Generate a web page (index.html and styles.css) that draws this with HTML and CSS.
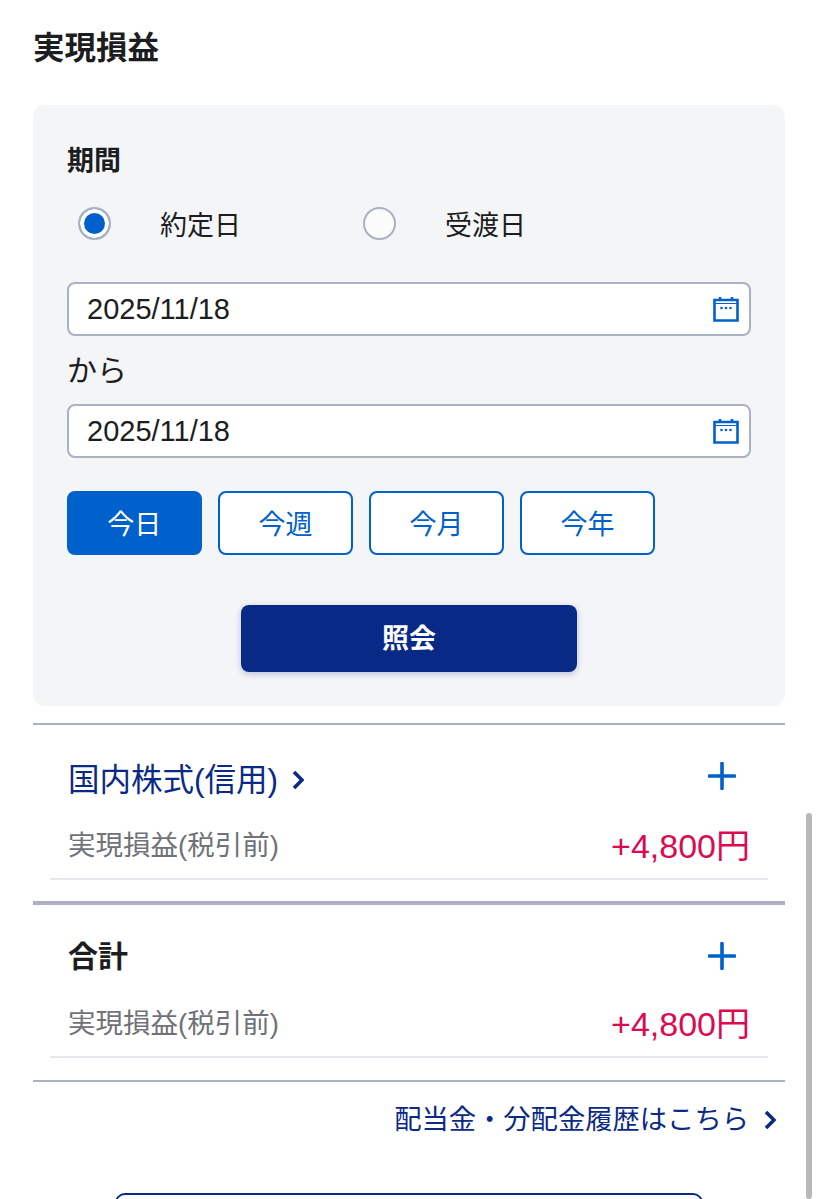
FILE: index.html
```html
<!DOCTYPE html>
<html lang="ja">
<head>
    <meta charset="UTF-8">
    <meta name="viewport" content="width=device-width, initial-scale=1.0">
    <title>実現損益</title>
    <link rel="stylesheet" href="styles.css">
</head>
<body>
    <h1 class="page-title">実現損益</h1>

    <form class="search-panel">
        <div class="panel-label">期間</div>
        <div class="radio-row">
            <label class="radio-item"><span class="radio radio-on"></span><span class="radio-text">約定日</span></label>
            <label class="radio-item"><span class="radio"></span><span class="radio-text">受渡日</span></label>
        </div>
        <div class="date-input">
            <span class="date-text">2025/11/18</span>
            <svg class="calendar" viewBox="0 0 26 26" width="26" height="26"><path d="M1.500 4h23v20.500h-23zM7 1v3.500M19 1v3.500" fill="none" stroke="#0060cc" stroke-width="2.600"/><path d="M1.500 7.500h23" stroke="#0060cc" stroke-width="1"/><circle cx="8.500" cy="12" r="1.300" fill="#0060cc"/><circle cx="13" cy="12" r="1.300" fill="#0060cc"/><circle cx="17.500" cy="12" r="1.300" fill="#0060cc"/></svg>
        </div>
        <div class="date-sep">から</div>
        <div class="date-input">
            <span class="date-text">2025/11/18</span>
            <svg class="calendar" viewBox="0 0 26 26" width="26" height="26"><path d="M1.500 4h23v20.500h-23zM7 1v3.500M19 1v3.500" fill="none" stroke="#0060cc" stroke-width="2.600"/><path d="M1.500 7.500h23" stroke="#0060cc" stroke-width="1"/><circle cx="8.500" cy="12" r="1.300" fill="#0060cc"/><circle cx="13" cy="12" r="1.300" fill="#0060cc"/><circle cx="17.500" cy="12" r="1.300" fill="#0060cc"/></svg>
        </div>
        <div class="range-buttons">
            <button type="button" class="range-btn active">今日</button>
            <button type="button" class="range-btn">今週</button>
            <button type="button" class="range-btn">今月</button>
            <button type="button" class="range-btn">今年</button>
        </div>
        <button type="button" class="submit-btn">照会</button>
    </form>

    <section class="result result-first">
        <div class="result-head">
            <a class="result-link">国内株式(信用)<svg class="chevron" viewBox="0 0 12 20" width="12" height="20"><path d="M2 2l8 8-8 8" fill="none" stroke="#0a2a85" stroke-width="3.600"/></svg></a>
            <svg class="plus plus-first" viewBox="0 0 28 28" width="28" height="28"><path d="M1.500 14h25M14 1.500v25" stroke="#0060cc" stroke-width="3.600" stroke-linecap="round"/></svg>
        </div>
        <div class="result-detail">
            <span class="detail-label">実現損益(税引前)</span>
            <span class="detail-value">+4,800円</span>
        </div>
    </section>

    <section class="result result-total">
        <div class="result-head">
            <span class="result-name">合計</span>
            <svg class="plus" viewBox="0 0 28 28" width="28" height="28"><path d="M1.500 14h25M14 1.500v25" stroke="#0060cc" stroke-width="3.600" stroke-linecap="round"/></svg>
        </div>
        <div class="result-detail">
            <span class="detail-label">実現損益(税引前)</span>
            <span class="detail-value">+4,800円</span>
        </div>
    </section>

    <div class="history">
        <a class="history-link">配当金・分配金履歴はこちら<svg class="chevron" viewBox="0 0 12 20" width="12" height="20"><path d="M2 2l8 8-8 8" fill="none" stroke="#0a2a85" stroke-width="3.600"/></svg></a>
    </div>

    <div class="bottom-btn"></div>

    <div class="scrollbar"></div>
</body>
</html>
```

FILE: styles.css
```css
html, body {
    height: 1199px;
    overflow: hidden;
}
body {
    position: relative;
    margin: 0;
    padding: 0 33px;
    background-color: #fff;
    color: #1c1d20;
    font-family: "Liberation Sans", "Noto Sans CJK JP", sans-serif;
}
.page-title {
    height: 39px;
    margin: 0 0 38px;
    padding-top: 28px;
    font-size: 31.500px;
    font-weight: 700;
    line-height: 40px;
}
.search-panel {
    padding: 38px 34px 34px;
    background-color: #f4f5f7;
    border-radius: 12px;
}
.panel-label {
    height: 35px;
    font-size: 27px;
    font-weight: 700;
    line-height: 36px;
}
.radio-row {
    display: flex;
    margin-top: 29px;
    padding-left: 11px;
}
.radio-item {
    display: flex;
    align-items: center;
    width: 285px;
    height: 33px;
    font-size: 27px;
}
.radio {
    box-sizing: border-box;
    width: 33px;
    height: 33px;
    margin-right: 49px;
    background-color: #fbfbfc;
    border: 2px solid #a9b1c2;
    border-radius: 50%;
}
.radio-on {
    background-color: #0060cc;
    box-shadow: inset 0 0 0 4px #fff;
}
.date-input {
    display: flex;
    align-items: center;
    justify-content: space-between;
    box-sizing: border-box;
    height: 54px;
    margin-top: 42px;
    padding: 0 10px 0 18px;
    background-color: #fff;
    border: 2px solid #a9b1c2;
    border-radius: 8px;
    font-size: 29px;
}
.date-text {
    padding-top: 1px;
}
.date-sep {
    height: 68px;
    font-size: 30px;
    line-height: 70px;
}
.date-sep + .date-input {
    margin-top: 0;
}
.range-buttons {
    display: flex;
    gap: 16.500px;
    margin-top: 33px;
}
.range-btn {
    box-sizing: border-box;
    width: 134.600px;
    height: 64px;
    padding: 0 0 2px;
    background-color: #fff;
    border: 2px solid #0060cc;
    border-radius: 8px;
    color: #0060cc;
    font-family: inherit;
    font-size: 27px;
}
.range-btn.active {
    background-color: #0060cc;
    color: #fff;
}
.submit-btn {
    display: block;
    width: 336px;
    height: 67px;
    margin: 50px auto 0;
    padding: 0 0 4px;
    background-color: #082a86;
    border: none;
    border-radius: 8px;
    box-shadow: 0 2px 6px rgba(8, 42, 134, 0.25);
    color: #fff;
    font-family: inherit;
    font-size: 27px;
    font-weight: 700;
}
.result-first {
    margin-top: 17px;
    border-top: 2px solid #a9b1c2;
}
.result-total {
    margin-top: 21px;
    border-top: 4px solid #a9b1c2;
}
.result-head {
    display: flex;
    align-items: center;
    justify-content: space-between;
    height: 54px;
    padding: 25px 49px 0 35px;
}
.result-first .result-head {
    padding-top: 27px;
}
.result-link {
    display: flex;
    align-items: center;
    margin-top: 2px;
    color: #0a2a85;
    font-size: 31.500px;
    line-height: 40px;
}
.result-link .chevron {
    margin-left: 14px;
}
.result-name {
    font-size: 30px;
    font-weight: 700;
    line-height: 40px;
}
.plus {
    margin-top: -2px;
}
.plus-first {
    margin-top: -6px;
}
.result-detail {
    display: flex;
    align-items: center;
    justify-content: space-between;
    height: 40px;
    margin: 0 17px;
    padding: 19px 18px 13px;
    border-bottom: 2px solid #e6e8ee;
}
.detail-label {
    padding-top: 2px;
    color: #6f7278;
    font-size: 27.500px;
    line-height: 36px;
}
.detail-value {
    padding-top: 2px;
    color: #dc0a50;
    font-size: 34px;
    line-height: 40px;
}
.history {
    display: flex;
    justify-content: flex-end;
    margin-top: 22px;
    padding: 18px 9px 0 0;
    border-top: 2px solid #a9b1c2;
}
.history-link {
    display: flex;
    align-items: center;
    height: 40px;
    color: #0a2a85;
    font-size: 27.300px;
    line-height: 36px;
}
.history-link .chevron {
    margin-left: 15px;
}
.bottom-btn {
    box-sizing: border-box;
    width: 588px;
    height: 64px;
    margin: 53px auto 0;
    border: 2px solid #0a2a85;
    border-radius: 10px;
}
.scrollbar {
    position: absolute;
    top: 813px;
    right: 6px;
    width: 6px;
    height: 386px;
    background-color: #b9b9b9;
    border-radius: 3px;
}
```
